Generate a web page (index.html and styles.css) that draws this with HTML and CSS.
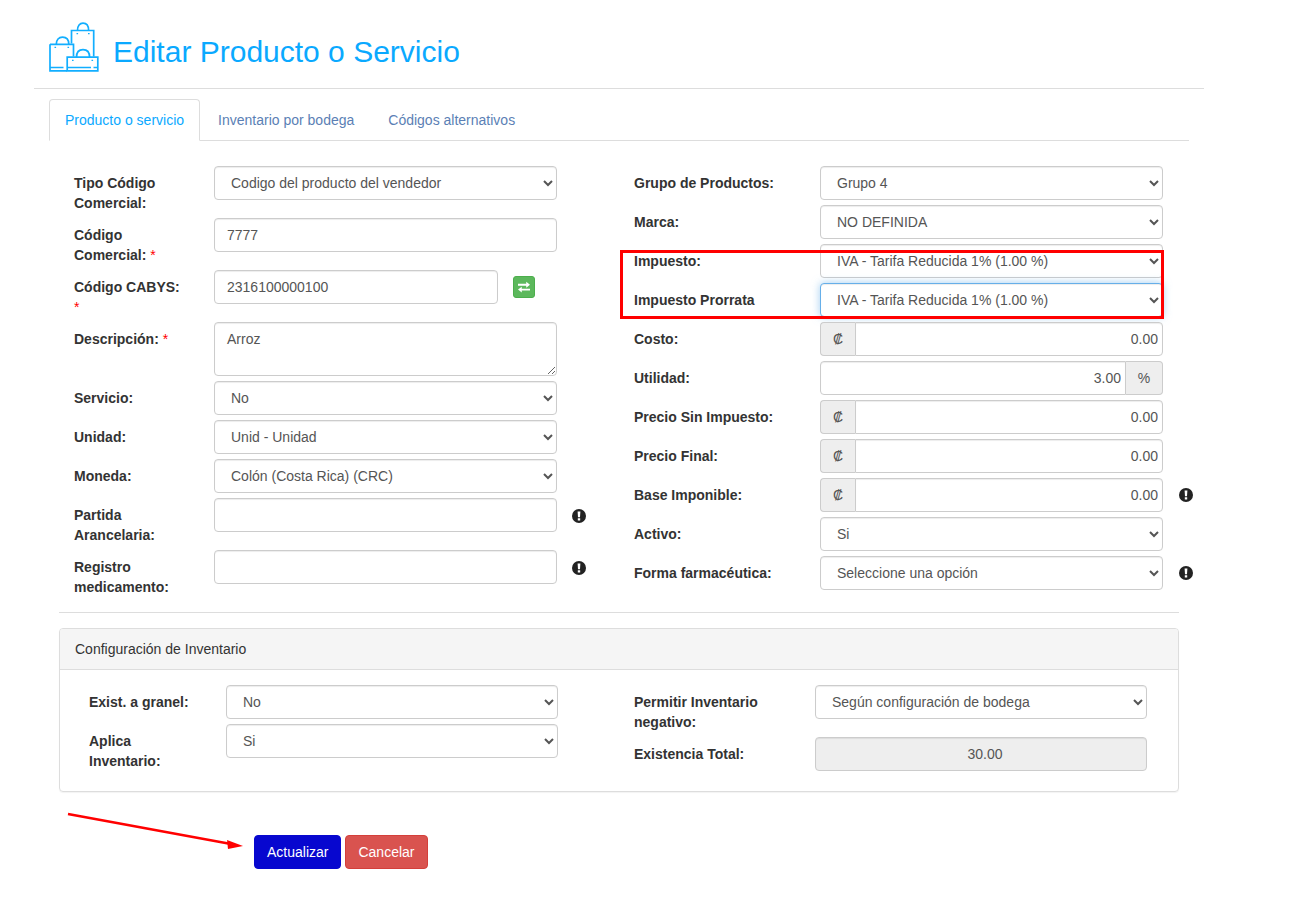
FILE: index.html
```html
<!DOCTYPE html>
<html lang="es">
<head>
<meta charset="utf-8">
<title>Editar Producto o Servicio</title>
<link rel="stylesheet" href="styles.css">
</head>
<body>
<div class="container">
  <header class="page-head">
    <svg class="head-icon" viewBox="0 0 50 50" fill="none" stroke="#12aeff" stroke-width="1.7">
      <path d="M22.5 21.5V8.5H44.7V34.5"/>
      <path d="M28.5 8.5C28.5 3.8 30.8 1.2 34 1.2S39.6 3.8 39.6 8.5"/>
      <path d="M1 22.3H24.5V34.5M18 48.8H1V22.3"/>
      <path d="M7.3 22.3C7.3 17.6 9.8 15.2 13.5 15.2S19.8 17.6 19.8 22.3"/>
      <path d="M18.2 35.2H48.8V48.8H18.2Z"/>
      <path d="M27.5 35.2C27.5 30.2 30 27.6 34 27.6S40.6 30.2 40.6 35.2"/>
      <path d="M1 45.5H14.5M18.2 45.5H42M44.5 45.5H48.8"/>
      <path d="M27.5 11.6h1.6M39 11.6h1.6M5.5 25.4h1.6M18.5 25.4h1.6M23 38.4h1.6M42.5 38.4h1.6" stroke-width="1.4"/>
    </svg>
    <h1 class="page-title">Editar Producto o Servicio</h1>
  </header>
  <hr class="head-rule">

  <div class="content">
    <nav class="tabs">
      <a class="tab active">Producto o servicio</a>
      <a class="tab">Inventario por bodega</a>
      <a class="tab">Códigos alternativos</a>
    </nav>

    <form class="product-form">
      <div class="form-cols">
        <div class="col">
          <div class="row">
            <label class="lbl">Tipo Código Comercial:</label>
            <div class="field"><select class="ctl"><option>Codigo del producto del vendedor</option></select></div>
          </div>
          <div class="row">
            <label class="lbl">Código Comercial: <span class="req">*</span></label>
            <div class="field"><input class="ctl" value="7777"></div>
          </div>
          <div class="row">
            <label class="lbl">Código CABYS: <span class="req">*</span></label>
            <div class="field field-short"><input class="ctl" value="2316100000100"></div>
            <button type="button" class="swap-btn" aria-label="Cambiar">
              <svg viewBox="0 0 16 14" width="14" height="12" fill="#fff"><path d="M1 3.2h9.6V.9L15 4.4l-4.4 3.4V5.5H1zM15 9v2.2H5.4v2.2L1 10 5.4 6.6v2.4z"/></svg>
            </button>
          </div>
          <div class="row">
            <label class="lbl">Descripción: <span class="req">*</span></label>
            <div class="field"><textarea class="ctl area">Arroz</textarea></div>
          </div>
          <div class="row">
            <label class="lbl">Servicio:</label>
            <div class="field"><select class="ctl"><option>No</option></select></div>
          </div>
          <div class="row">
            <label class="lbl">Unidad:</label>
            <div class="field"><select class="ctl"><option>Unid - Unidad</option></select></div>
          </div>
          <div class="row">
            <label class="lbl">Moneda:</label>
            <div class="field"><select class="ctl"><option>Colón (Costa Rica) (CRC)</option></select></div>
          </div>
          <div class="row">
            <label class="lbl">Partida Arancelaria:</label>
            <div class="field"><input class="ctl"></div>
            <svg class="alert" viewBox="0 0 14 14"><circle cx="7" cy="7" r="7" fill="#222"/><path d="M5.6 2.6h2.8l-.4 5.6H6zM5.8 9.2h2.4v2.2H5.8z" fill="#fff"/></svg>
          </div>
          <div class="row">
            <label class="lbl">Registro medicamento:</label>
            <div class="field"><input class="ctl"></div>
            <svg class="alert" viewBox="0 0 14 14"><circle cx="7" cy="7" r="7" fill="#222"/><path d="M5.6 2.6h2.8l-.4 5.6H6zM5.8 9.2h2.4v2.2H5.8z" fill="#fff"/></svg>
          </div>
        </div>

        <div class="col">
          <div class="row">
            <label class="lbl lbl-wide">Grupo de Productos:</label>
            <div class="field"><select class="ctl"><option>Grupo 4</option></select></div>
          </div>
          <div class="row">
            <label class="lbl lbl-wide">Marca:</label>
            <div class="field"><select class="ctl"><option>NO DEFINIDA</option></select></div>
          </div>
          <div class="row">
            <label class="lbl lbl-wide">Impuesto:</label>
            <div class="field"><select class="ctl"><option>IVA - Tarifa Reducida 1% (1.00 %)</option></select></div>
          </div>
          <div class="row">
            <label class="lbl lbl-wide">Impuesto Prorrata</label>
            <div class="field"><select class="ctl focused"><option>IVA - Tarifa Reducida 1% (1.00 %)</option></select></div>
          </div>
          <div class="row">
            <label class="lbl lbl-wide">Costo:</label>
            <div class="field group"><span class="addon addon-l">₡</span><input class="ctl num joined-l" value="0.00"></div>
          </div>
          <div class="row">
            <label class="lbl lbl-wide">Utilidad:</label>
            <div class="field group"><input class="ctl num joined-r" value="3.00"><span class="addon addon-r">%</span></div>
          </div>
          <div class="row">
            <label class="lbl lbl-wide">Precio Sin Impuesto:</label>
            <div class="field group"><span class="addon addon-l">₡</span><input class="ctl num joined-l" value="0.00"></div>
          </div>
          <div class="row">
            <label class="lbl lbl-wide">Precio Final:</label>
            <div class="field group"><span class="addon addon-l">₡</span><input class="ctl num joined-l" value="0.00"></div>
          </div>
          <div class="row">
            <label class="lbl lbl-wide">Base Imponible:</label>
            <div class="field group"><span class="addon addon-l">₡</span><input class="ctl num joined-l" value="0.00"></div>
            <svg class="alert alert-right" viewBox="0 0 14 14"><circle cx="7" cy="7" r="7" fill="#222"/><path d="M5.6 2.6h2.8l-.4 5.6H6zM5.8 9.2h2.4v2.2H5.8z" fill="#fff"/></svg>
          </div>
          <div class="row">
            <label class="lbl lbl-wide">Activo:</label>
            <div class="field"><select class="ctl"><option>Si</option></select></div>
          </div>
          <div class="row">
            <label class="lbl lbl-wide">Forma farmacéutica:</label>
            <div class="field"><select class="ctl"><option>Seleccione una opción</option></select></div>
            <svg class="alert alert-right" viewBox="0 0 14 14"><circle cx="7" cy="7" r="7" fill="#222"/><path d="M5.6 2.6h2.8l-.4 5.6H6zM5.8 9.2h2.4v2.2H5.8z" fill="#fff"/></svg>
          </div>
        </div>
      </div>

      <hr class="form-rule">

      <section class="panel">
        <div class="panel-head">Configuración de Inventario</div>
        <div class="panel-body">
          <div class="col">
            <div class="row">
              <label class="lbl lbl-inv">Exist. a granel:</label>
              <div class="field field-inv"><select class="ctl"><option>No</option></select></div>
            </div>
            <div class="row">
              <label class="lbl lbl-inv">Aplica Inventario:</label>
              <div class="field field-inv"><select class="ctl"><option>Si</option></select></div>
            </div>
          </div>
          <div class="col">
            <div class="row">
              <label class="lbl lbl-inv-wide">Permitir Inventario negativo:</label>
              <div class="field field-inv"><select class="ctl"><option>Según configuración de bodega</option></select></div>
            </div>
            <div class="row">
              <label class="lbl lbl-inv-wide">Existencia Total:</label>
              <div class="field field-inv"><input class="ctl readonly" value="30.00" disabled></div>
            </div>
          </div>
        </div>
      </section>

      <div class="actions">
        <button type="button" class="btn btn-primary">Actualizar</button>
        <button type="button" class="btn btn-danger">Cancelar</button>
      </div>
    </form>
  </div>
</div>

<div class="mark-box"></div>
<svg class="mark-arrow" width="190" height="50" viewBox="0 0 190 50">
  <path d="M2 3L165 33" stroke="#f00" stroke-width="2.6"/>
  <path d="M177 35L161 29L162 38Z" fill="#f00"/>
</svg>
</body>
</html>
```

FILE: styles.css
```css
* { box-sizing: border-box; }

body {
  margin: 0;
  background: #fff;
  color: #333;
  font-family: "Liberation Sans", Arial, sans-serif;
  font-size: 14px;
  line-height: 20px;
}

.container {
  width: 1170px;
  margin-left: 34px;
  padding-top: 22px;
  padding-bottom: 42px;
}

.page-head {
  display: flex;
  align-items: center;
  gap: 14px;
  height: 50px;
  padding-left: 15px;
}

.head-icon { width: 50px; height: 50px; flex: none; }

.page-title {
  margin: 9px 0 0;
  font-size: 30px;
  font-weight: 400;
  line-height: 33px;
  color: #0aa9ff;
}

.head-rule {
  margin: 16px 0 10px;
  border: 0;
  border-top: 1px solid #ddd;
}

.content { padding: 0 15px; }

.tabs {
  display: flex;
  height: 42px;
  border-bottom: 1px solid #ddd;
}

.tab {
  height: 42px;
  margin-right: 2px;
  padding: 10px 15px;
  border: 1px solid transparent;
  border-radius: 4px 4px 0 0;
  color: #5b7fb5;
}

.tab.active {
  color: #0aa9ff;
  background: #fff;
  border-color: #ddd #ddd #fff;
}

.product-form { padding: 25px 10px 0; }

.form-cols {
  display: grid;
  grid-template-columns: 560px 1fr;
  padding-left: 15px;
}

.row {
  display: flex;
  align-items: flex-start;
  margin-bottom: 5px;
}

.lbl {
  flex: none;
  width: 140px;
  padding: 7px 30px 0 0;
  font-weight: 700;
}

.lbl-wide { width: 186px; }
.lbl-inv { width: 137px; }
.lbl-inv-wide { width: 181px; }

.req { color: #f00; font-weight: 400; }

.field { flex: none; width: 343px; }
.field-short { width: 284px; }
.field-inv { width: 332px; }

.ctl {
  display: block;
  width: 100%;
  height: 34px;
  padding: 6px 12px;
  border: 1px solid #ccc;
  border-radius: 4px;
  background-color: #fff;
  box-shadow: inset 0 1px 1px rgba(0, 0, 0, .075);
  color: #555;
  font-family: inherit;
  font-size: 14px;
  line-height: 20px;
}

.area { height: 54px; }

.focused {
  border-color: #66afe9;
  box-shadow: inset 0 1px 1px rgba(0, 0, 0, .075), 0 0 8px rgba(102, 175, 233, .6);
  outline: 0;
}

.group { display: flex; }

.addon {
  flex: none;
  height: 34px;
  padding: 6px 0;
  border: 1px solid #ccc;
  background: #eee;
  color: #555;
  text-align: center;
}

.addon-l { width: 35px; border-right: 0; border-radius: 4px 0 0 4px; }
.addon-r { width: 37px; border-left: 0; border-radius: 0 4px 4px 0; }

.num { flex: 1; min-width: 0; padding-right: 4px; text-align: right; }
.joined-l { border-radius: 0 4px 4px 0; }
.joined-r { border-radius: 4px 0 0 4px; }

.readonly {
  padding-left: 20px;
  background: #eee;
  text-align: center;
  opacity: 1;
}

.swap-btn {
  display: flex;
  align-items: center;
  justify-content: center;
  flex: none;
  width: 22px;
  height: 22px;
  margin: 6px 0 0 15px;
  padding: 0;
  border: 1px solid #4cae4c;
  border-radius: 3px;
  background: #5cb85c;
}

.alert {
  flex: none;
  width: 14px;
  height: 14px;
  margin: 11px 0 0 15px;
}

.alert-right { margin: 10px 0 0 16px; }

.form-rule {
  margin: 10px 0 15px;
  border: 0;
  border-top: 1px solid #ddd;
}

.panel {
  border: 1px solid #ddd;
  border-radius: 4px;
  box-shadow: 0 1px 1px rgba(0, 0, 0, .05);
}

.panel-head {
  height: 41px;
  padding: 10px 15px;
  border-bottom: 1px solid #ddd;
  border-radius: 3px 3px 0 0;
  background: #f5f5f5;
}

.panel-body {
  display: grid;
  grid-template-columns: 545px 1fr;
  padding: 15px 15px 15px 29px;
}

.actions {
  display: flex;
  gap: 4px;
  margin-top: 43px;
  padding-left: 195px;
}

.btn {
  height: 34px;
  padding: 6px 12px;
  border: 1px solid transparent;
  border-radius: 4px;
  color: #fff;
  font-family: inherit;
  font-size: 14px;
  line-height: 20px;
}

.btn-primary { background: #0707cf; border-color: #0707cf; }
.btn-danger { background: #d9534f; border-color: #d43f3a; }

.mark-box {
  position: absolute;
  left: 620px;
  top: 250px;
  width: 544px;
  height: 69px;
  border: 3px solid #f00;
}

.mark-arrow {
  position: absolute;
  left: 66px;
  top: 811px;
}
```
